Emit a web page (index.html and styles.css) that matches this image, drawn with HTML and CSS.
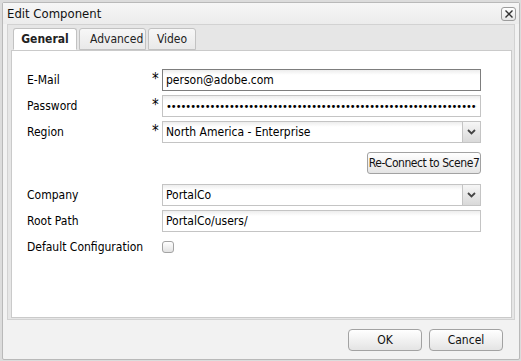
FILE: index.html
```html
<!DOCTYPE html>
<html lang="en">
  <head>
    <meta charset="UTF-8" />
    <title>Edit Component</title>
    <link rel="stylesheet" href="styles.css">
  </head>
  <body>
    <div class="dialog">
      <div class="titlebar">
        <span class="title">Edit Component</span>
        <span class="close-btn">
          <svg width="10" height="10" viewBox="0 0 10 10"><path d="M1.5 1.5 L8.5 8.5 M8.5 1.5 L1.5 8.5" stroke="#333" stroke-width="1.4" /></svg>
        </span>
      </div>

      <div class="panel">
        <div class="tabs">
          <span class="tab active">General</span>
          <span class="tab">Advanced</span>
          <span class="tab">Video</span>
        </div>

        <div class="tab-body">
          <div class="row">
            <label class="label">E-Mail</label>
            <span class="req">*</span>
            <input class="field focused" type="text" value="person@adobe.com" />
          </div>
          <div class="row">
            <label class="label">Password</label>
            <span class="req">*</span>
            <input class="field password" type="password" value="passwordpasswordpasswordpasswordpasswordpasswordpasswordpasswordpassword" />
          </div>
          <div class="row">
            <label class="label">Region</label>
            <span class="req">*</span>
            <div class="field combo">
              <span class="combo-value">North America - Enterprise</span>
              <span class="combo-arrow">
                <svg width="9" height="6" viewBox="0 0 9 6"><path d="M1 1 L4.5 4.5 L8 1" fill="none" stroke="#444" stroke-width="1.8" /></svg>
              </span>
            </div>
          </div>
          <div class="row row-button">
            <button class="btn reconnect">Re-Connect to Scene7</button>
          </div>
          <div class="row row-company">
            <label class="label">Company</label>
            <span class="req"></span>
            <div class="field combo">
              <span class="combo-value">PortalCo</span>
              <span class="combo-arrow">
                <svg width="9" height="6" viewBox="0 0 9 6"><path d="M1 1 L4.5 4.5 L8 1" fill="none" stroke="#444" stroke-width="1.8" /></svg>
              </span>
            </div>
          </div>
          <div class="row">
            <label class="label">Root Path</label>
            <span class="req"></span>
            <input class="field" type="text" value="PortalCo/users/" />
          </div>
          <div class="row">
            <label class="label">Default Configuration</label>
            <span class="req"></span>
            <input class="check" type="checkbox" />
          </div>
        </div>
      </div>

      <div class="footer">
        <button class="btn footer-btn">OK</button>
        <button class="btn footer-btn">Cancel</button>
      </div>
    </div>
  </body>
</html>
```

FILE: styles.css
```css
* {
  box-sizing: border-box;
  margin: 0;
  padding: 0;
}

body {
  background-color: #dcdcdc;
  font-family: "DejaVu Sans Condensed", "DejaVu Sans", sans-serif;
  font-stretch: condensed;
  font-size: 12px;
  color: #000;
  padding: 2px;
}

.dialog {
  width: 518px;
  height: 358px;
  border: 1px solid #b9b9b9;
  border-radius: 2px;
  background-color: #f2f2f2;
  display: flex;
  flex-direction: column;
}

.titlebar {
  height: 21px;
  display: flex;
  align-items: center;
  justify-content: space-between;
  padding: 0 3px 0 4px;
  background: linear-gradient(#f6f6f6, #ececec);
}

.title {
  font-size: 13px;
  color: #111;
}

.close-btn {
  width: 15px;
  height: 14px;
  border: 1px solid #9c9c9c;
  border-radius: 3px;
  background: linear-gradient(#ffffff, #e6e6e6);
  display: flex;
  align-items: center;
  justify-content: center;
}

.panel {
  height: 296px;
  margin: 0 4px;
  border: 1px solid #d2d2d2;
  background-color: #e6e6e6;
  padding: 0 2px 1px 3px;
  display: flex;
  flex-direction: column;
}

.tabs {
  display: flex;
  gap: 2px;
  padding: 3px 0 0 2px;
  height: 25px;
  position: relative;
  z-index: 1;
}

.tab {
  height: 22px;
  padding: 0 10px;
  border: 1px solid #c2c2c2;
  border-radius: 3px 3px 0 0;
  background: linear-gradient(#f7f7f7, #e9e9e9);
  line-height: 20px;
  color: #222;
}
.tab:nth-child(2) {
  width: 67px;
}
.tab:nth-child(3) {
  width: 48px;
  padding: 0;
  text-align: center;
}
.tab.active {
  width: 64px;
  padding: 0;
  text-align: center;
  font-weight: bold;
  background: #ffffff;
  border-bottom-color: #ffffff;
}

.tab-body {
  flex-grow: 1;
  background-color: #ffffff;
  border: 1px solid #cacaca;
  padding: 18px 0 0 15px;
  display: flex;
  flex-direction: column;
  gap: 4px;
}

.row {
  display: flex;
  align-items: center;
  height: 22px;
}
.row-button {
  width: 454px;
  margin-top: 5px;
  justify-content: flex-end;
}
.row-company {
  margin-top: 6px;
}

.label {
  width: 125px;
}

.req {
  width: 10px;
  align-self: flex-start;
  padding-top: 2px;
  font-size: 15px;
  line-height: 16px;
}

.field {
  width: 319px;
  height: 22px;
  border: 1px solid #c4c4c4;
  background: linear-gradient(#ededed, #ffffff 5px);
  font-family: inherit;
  font-stretch: condensed;
  font-size: 12px;
  color: #000;
  padding: 0 3px;
  outline: none;
}
.field.focused {
  border-color: #7d7d7d;
}
.field.password {
  font-size: 11px;
  letter-spacing: -1px;
  padding-left: 3px;
}

.combo {
  display: flex;
  align-items: center;
  padding-right: 0;
}
.combo-value {
  flex-grow: 1;
}
.combo-arrow {
  width: 18px;
  height: 100%;
  border-left: 1px solid #c4c4c4;
  background: linear-gradient(#f6f6f6, #d9d9d9);
  display: flex;
  align-items: center;
  justify-content: center;
}

.check {
  appearance: none;
  width: 12px;
  height: 12px;
  border: 1px solid #a3a3a3;
  border-radius: 3px;
  background: linear-gradient(#ffffff, #e2e2e2);
}

.btn {
  font-family: inherit;
  font-stretch: condensed;
  font-size: 12px;
  color: #111;
  height: 22px;
  padding: 0;
  white-space: nowrap;
  border: 1px solid #a2a2a2;
  border-radius: 4px;
  background: linear-gradient(#ffffff, #e4e4e4);
}
.reconnect {
  width: 114px;
  border-radius: 3px;
  letter-spacing: -0.45px;
}

.footer {
  flex-grow: 1;
  display: flex;
  justify-content: flex-end;
  gap: 7px;
  padding: 9px 16px 0 0;
}
.footer-btn {
  width: 74px;
}
```
